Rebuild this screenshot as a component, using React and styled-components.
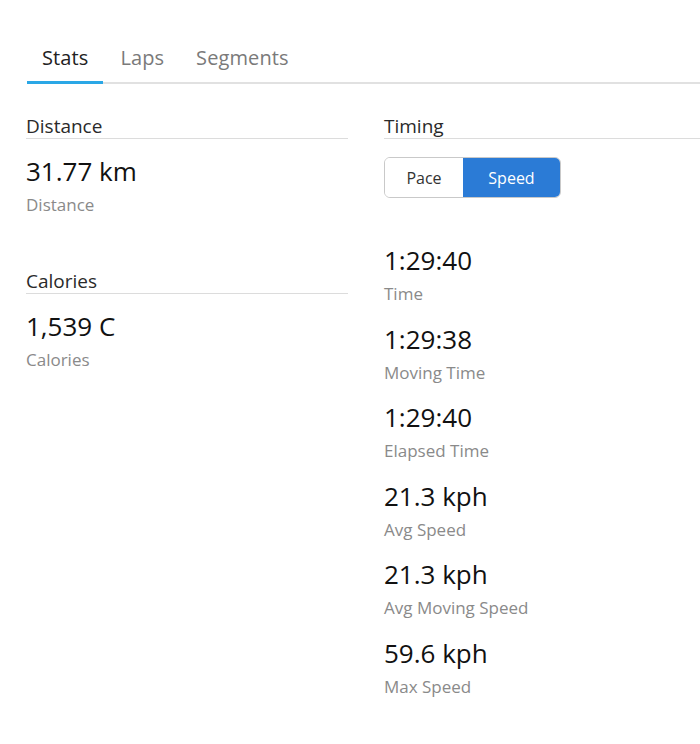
import React, { useState } from 'react';
import styled, { createGlobalStyle } from 'styled-components';

const GlobalStyle = createGlobalStyle`
  body {
    margin: 0;
    background: #ffffff;
    font-family: 'Open Sans', 'Liberation Sans', sans-serif;
    overflow: hidden;
  }
`;

const Page = styled.div`
  width: 700px;
  height: 744px;
  overflow: hidden;
`;

const TabList = styled.div`
  display: flex;
  gap: 2px;
  margin-left: 27px;
  padding-top: 46px;
  border-bottom: 2px solid #e1e1e1;
`;

const Tab = styled.div`
  padding: 0 15px 11px;
  margin-bottom: -2px;
  font-size: 20px;
  line-height: 24px;
  letter-spacing: 0.1px;
  color: ${({ active }) => (active ? '#222' : '#7a7a7a')};
  border-bottom: 3px solid ${({ active }) => (active ? '#2aa7e6' : 'transparent')};
  cursor: pointer;
`;

const Columns = styled.div`
  display: grid;
  grid-template-columns: 322px 1fr;
  column-gap: 36px;
  padding-left: 26px;
  padding-top: 31px;
`;

const Column = styled.div`
  display: flex;
  flex-direction: column;
`;

const Section = styled.div`
  display: flex;
  flex-direction: column;
  margin-bottom: ${({ spacing }) => spacing || 0}px;
`;

const Heading = styled.div`
  font-size: 19px;
  line-height: 23px;
  color: #2a2a2a;
  border-bottom: 1px solid #dcdcdc;
`;

const Stat = styled.div`
  display: flex;
  flex-direction: column;
  margin-top: ${({ top }) => top || 0}px;
`;

const Value = styled.div`
  font-size: 26px;
  line-height: 32px;
  color: #111;
`;

const Label = styled.div`
  margin-top: 6px;
  font-size: 17px;
  line-height: 23px;
  color: #8a8a8a;
`;

const Toggle = styled.div`
  display: flex;
  margin-top: 18px;
  align-self: flex-start;
  height: 39px;
  border: 1px solid #c9c9c9;
  border-radius: 6px;
  overflow: hidden;
`;

const ToggleButton = styled.button`
  width: ${({ width }) => width}px;
  border: none;
  margin: 0;
  padding: 0;
  font-family: inherit;
  font-size: 16px;
  color: ${({ active }) => (active ? '#fff' : '#333')};
  background: ${({ active }) => (active ? '#2b7bd6' : '#fff')};
  cursor: pointer;
`;

const timing = [
  { value: '1:29:40', label: 'Time' },
  { value: '1:29:38', label: 'Moving Time' },
  { value: '1:29:40', label: 'Elapsed Time' },
  { value: '21.3 kph', label: 'Avg Speed' },
  { value: '21.3 kph', label: 'Avg Moving Speed' },
  { value: '59.6 kph', label: 'Max Speed' },
];

const App = () => {
  const [tab, setTab] = useState('Stats');
  const [mode, setMode] = useState('Speed');

  return (
    <Page>
      <GlobalStyle />
      <TabList>
        {['Stats', 'Laps', 'Segments'].map((name) => (
          <Tab key={name} active={tab === name} onClick={() => setTab(name)}>
            {name}
          </Tab>
        ))}
      </TabList>

      <Columns>
        <Column>
          <Section spacing={54}>
            <Heading>Distance</Heading>
            <Stat top={16}>
              <Value>31.77 km</Value>
              <Label>Distance</Label>
            </Stat>
          </Section>
          <Section>
            <Heading>Calories</Heading>
            <Stat top={16}>
              <Value>1,539 C</Value>
              <Label>Calories</Label>
            </Stat>
          </Section>
        </Column>

        <Column>
          <Section>
            <Heading>Timing</Heading>
            <Toggle>
              <ToggleButton
                width={78}
                active={mode === 'Pace'}
                onClick={() => setMode('Pace')}
              >
                Pace
              </ToggleButton>
              <ToggleButton
                width={97}
                active={mode === 'Speed'}
                onClick={() => setMode('Speed')}
              >
                Speed
              </ToggleButton>
            </Toggle>
            {timing.map((item, i) => (
              <Stat key={i} top={i === 0 ? 46 : 17.5}>
                <Value>{item.value}</Value>
                <Label>{item.label}</Label>
              </Stat>
            ))}
          </Section>
        </Column>
      </Columns>
    </Page>
  );
};

export default App;
